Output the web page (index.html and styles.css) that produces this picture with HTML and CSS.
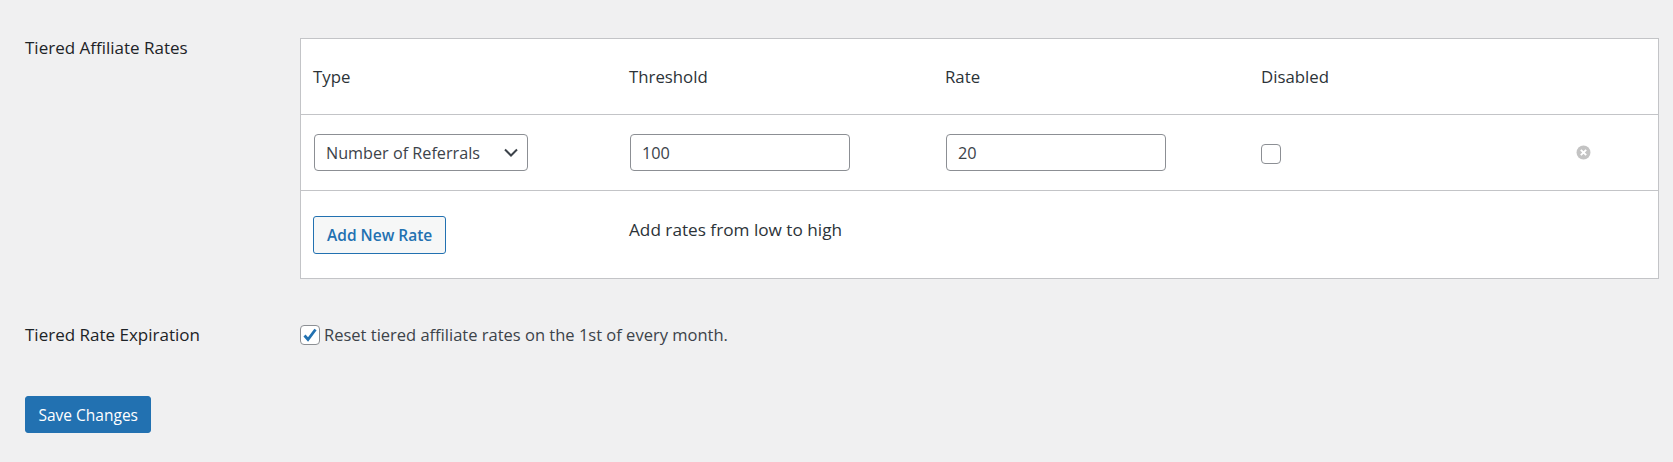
FILE: index.html
```html
<!DOCTYPE html>
<html lang="en">
<head>
    <meta charset="UTF-8">
    <title>Affiliate Settings</title>
    <link rel="stylesheet" href="styles.css">
</head>
<body>
<form class="settings">
    <div class="field">
        <div class="field-label">Tiered Affiliate Rates</div>
        <table class="rates">
            <thead>
                <tr>
                    <th>Type</th>
                    <th>Threshold</th>
                    <th>Rate</th>
                    <th>Disabled</th>
                    <th></th>
                </tr>
            </thead>
            <tbody>
                <tr>
                    <td>
                        <div class="select">
                            <span>Number of Referrals</span>
                            <svg width="16" height="10" viewBox="0 0 16 10"><path d="M2 1.5l6 6 6-6" fill="none" stroke="#3c434a" stroke-width="2"/></svg>
                        </div>
                    </td>
                    <td><input class="text-input" type="text" value="100"></td>
                    <td><input class="text-input" type="text" value="20"></td>
                    <td><span class="check check-disabled"></span></td>
                    <td>
                        <svg class="remove" width="15" height="15" viewBox="0 0 14 14">
                            <circle cx="7" cy="7" r="6.5" fill="#c3c3c3"/>
                            <path d="M4.500 4.500l5 5M9.500 4.500l-5 5" stroke="#fff" stroke-width="1.800"/>
                        </svg>
                    </td>
                </tr>
            </tbody>
            <tfoot>
                <tr>
                    <td><button class="btn-secondary" type="button">Add New Rate</button></td>
                    <td colspan="4" class="hint"><span class="hint-text">Add rates from low to high</span></td>
                </tr>
            </tfoot>
        </table>
    </div>
    <div class="field field-expire">
        <div class="field-label">Tiered Rate Expiration</div>
        <div class="expire">
            <span class="check checked">
                <svg width="18" height="18" viewBox="0 0 18 18"><path d="M3.500 9.500l3.500 4L14.500 3.500" fill="none" stroke="#2271b1" stroke-width="2.800"/></svg>
            </span>
            <span>Reset tiered affiliate rates on the 1st of every month.</span>
        </div>
    </div>
    <button class="btn-primary" type="button">Save Changes</button>
</form>
</body>
</html>
```

FILE: styles.css
```css
body {
    margin: 0;
    background: #f0f0f1;
    color: #3c434a;
    font-family: "Open Sans", "Noto Sans", sans-serif;
    font-size: 16.5px;
}
.settings {
    padding: 38px 14px 0 25px;
}
.field {
    display: flex;
}
.field-label {
    width: 275px;
    flex-shrink: 0;
    color: #1d2327;
    font-size: 17px;
    font-weight: 500;
    line-height: 20px;
}
.rates {
    flex: 1;
    border-collapse: collapse;
    table-layout: fixed;
    background: #fff;
    border: 1px solid #c3c4c7;
}
.rates th {
    width: 304px;
    height: 75px;
    padding: 0 0 0 12px;
    text-align: left;
    font-size: 16.8px;
    font-weight: 400;
    color: #2c3338;
}
.rates th:last-child {
    width: auto;
}
.rates td {
    height: 75px;
    padding: 0 0 0 13px;
    border-top: 1px solid #c3c4c7;
}
.rates tfoot td {
    height: 87px;
    border-top: 1px solid #c3c4c7;
}
.rates tfoot td:first-child {
    padding-left: 12px;
}
.select {
    display: flex;
    justify-content: space-between;
    align-items: center;
    box-sizing: border-box;
    width: 214px;
    height: 37px;
    padding: 1px 8px 0 11px;
    border: 1px solid #8c8f94;
    border-radius: 4px;
    font-size: 16.2px;
}
.text-input {
    display: block;
    box-sizing: border-box;
    width: 220px;
    height: 37px;
    padding: 1px 11px 0;
    border: 1px solid #8c8f94;
    border-radius: 4px;
    color: #3c434a;
    font-family: inherit;
    font-size: 16.3px;
}
.check {
    display: inline-block;
    box-sizing: border-box;
    width: 20px;
    height: 20px;
    border: 1px solid #8c8f94;
    border-radius: 4px;
    background: #fff;
    vertical-align: middle;
}
.check svg {
    display: block;
}
.check-disabled {
    margin-left: -1px;
}
.remove {
    display: block;
    margin-left: -2px;
}
.rates .hint {
    padding-left: 12px;
    color: #2c3338;
    font-size: 17.2px;
    font-weight: 500;
}
.hint-text {
    display: block;
    margin-bottom: 10px;
}
.btn-secondary {
    display: block;
    height: 38px;
    padding: 0 13px;
    border: 1px solid #2271b1;
    border-radius: 3px;
    background: #f6f7f7;
    color: #2271b1;
    font-family: inherit;
    font-size: 15.500px;
    font-weight: 600;
}
.field-expire {
    margin-top: 44px;
    align-items: center;
}
.expire {
    display: flex;
    align-items: center;
    gap: 4px;
}
.btn-primary {
    display: block;
    height: 37px;
    margin-top: 50px;
    padding: 0 12.500px;
    border: 1px solid #2271b1;
    border-radius: 3px;
    background: #2271b1;
    color: #fff;
    font-family: inherit;
    font-size: 15.500px;
}
```
